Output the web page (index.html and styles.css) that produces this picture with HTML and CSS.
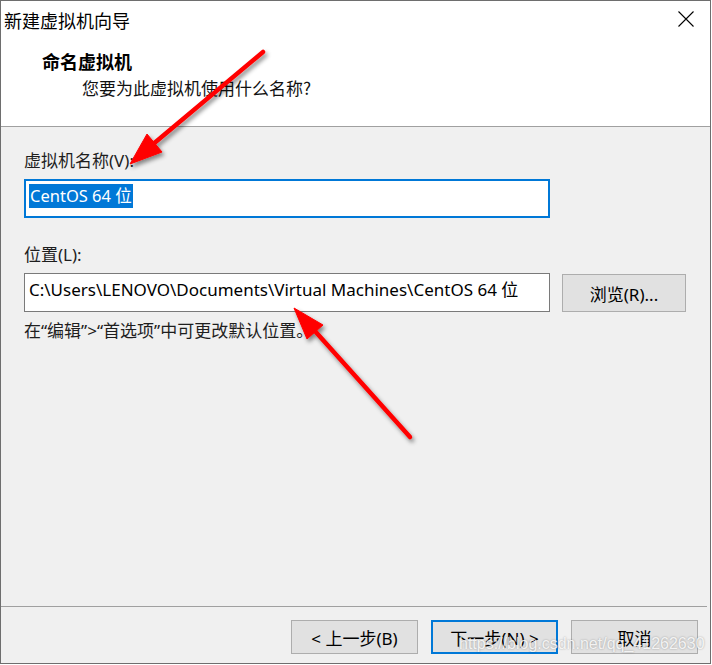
FILE: index.html
```html
<!DOCTYPE html>
<html lang="zh-CN">
<head>
<meta charset="utf-8">
<title>新建虚拟机向导</title>
<link rel="stylesheet" href="styles.css">
</head>
<body>
<div class="window">
  <div class="top">
    <div class="titlebar">
      <span class="title">新建虚拟机向导</span>
      <svg class="close" width="16" height="16" viewBox="0 0 16 16"><path d="M0.5 0.5 L15.5 15.5 M15.5 0.5 L0.5 15.5" stroke="#000" stroke-width="1.1" fill="none"/></svg>
    </div>
    <div class="heading">命名虚拟机</div>
    <div class="subheading">您要为此虚拟机使用什么名称?</div>
  </div>
  <div class="content">
    <div class="label">虚拟机名称(V):</div>
    <div class="input focused"><span class="sel">CentOS 64 位</span></div>
    <div class="label label2">位置(L):</div>
    <div class="row">
      <div class="input">C:\Users\LENOVO\Documents\Virtual Machines\CentOS 64 位</div>
      <div class="btn browse">浏览(R)...</div>
    </div>
    <div class="hint">在“编辑”&gt;“首选项”中可更改默认位置。</div>
  </div>
  <div class="footer">
    <div class="btn nav">&lt; 上一步(B)</div>
    <div class="btn nav default">下一步(N) &gt;</div>
    <div class="btn nav">取消</div>
  </div>
  <div class="watermark">https://blog.csdn.net/qq_41262630</div>
  <svg class="arrows" width="712" height="665" viewBox="0 0 712 665">
    <defs>
      <filter id="sh" x="-20%" y="-20%" width="140%" height="140%">
        <feDropShadow dx="2" dy="3" stdDeviation="2" flood-color="#000" flood-opacity="0.45"/>
      </filter>
    </defs>
    <g filter="url(#sh)" fill="#ff0000" stroke="#ff0000">
      <line x1="263" y1="52" x2="152" y2="145" stroke-width="4.5" stroke-linecap="round"/>
      <polygon points="130,164 162,152 147,134" stroke-width="1" stroke-linejoin="round"/>
      <line x1="410" y1="437" x2="314" y2="330" stroke-width="4.5" stroke-linecap="round"/>
      <polygon points="294,308 323,325 307,339" stroke-width="1" stroke-linejoin="round"/>
    </g>
  </svg>
</div>
</body>
</html>
```
FILE: styles.css
```css
html, body {
  margin: 0;
  padding: 0;
  background: #ffffff;
}
body {
  font-family: "Noto Sans", "Noto Sans CJK SC", sans-serif;
  color: #000;
}
.window {
  position: relative;
  width: 709px;
  height: 662px;
  border: 1px solid #6e6e6e;
  background: #f0f0f0;
  display: flex;
  flex-direction: column;
}
.top {
  background: #ffffff;
  border-bottom: 1px solid #a0a0a0;
  box-sizing: border-box;
  height: 126px;
}
.titlebar {
  display: flex;
  justify-content: space-between;
  align-items: flex-start;
  padding: 9px 16px 0 3px;
  height: 29px;
}
.title {
  font-family: "Noto Sans CJK SC", sans-serif;
  font-size: 18px;
  line-height: 20px;
}
.close {
  margin-top: 1px;
}
.heading {
  font-family: "Noto Sans CJK SC", sans-serif;
  font-weight: bold;
  font-size: 18px;
  line-height: 20px;
  margin: 12px 0 0 41px;
}
.subheading {
  font-family: "Noto Sans CJK SC", sans-serif;
  font-size: 17px;
  line-height: 20px;
  margin: 7px 0 0 81px;
  color: #111;
}
.content {
  flex: 1;
  padding: 24px 0 0 23px;
}
.label {
  font-size: 17px;
  line-height: 20px;
  color: #1e1e1e;
}
.label2 {
  margin-top: 27px;
}
.input {
  box-sizing: border-box;
  width: 526px;
  height: 39px;
  margin-top: 8px;
  background: #fff;
  border: 1px solid #7a7a7a;
  padding: 4px 0 0 4px;
  font-size: 17px;
  line-height: 24px;
  white-space: nowrap;
  overflow: hidden;
}
.input.focused {
  border: 2px solid #0078d7;
  padding: 3px 0 0 3px;
  font-size: 16.5px;
}
.sel {
  background: #0078d7;
  color: #fff;
  display: inline-block;
  padding: 0 1px 0 1px;
}
.row {
  display: flex;
  align-items: flex-start;
  gap: 12px;
}
.btn {
  box-sizing: border-box;
  background: #e1e1e1;
  border: 1px solid #adadad;
  display: flex;
  align-items: center;
  justify-content: center;
  font-size: 17px;
  color: #000;
}
.browse {
  width: 124px;
  height: 38px;
  margin-top: 9px;
}
.hint {
  font-size: 17px;
  line-height: 20px;
  margin-top: 9px;
  color: #1e1e1e;
}
.footer {
  height: 57px;
  box-sizing: border-box;
  border-top: 1px solid #a0a0a0;
  margin-right: 3px;
  display: flex;
  justify-content: flex-end;
  align-items: flex-start;
  gap: 13px;
  padding: 13px 9px 0 0;
}
.nav {
  width: 127px;
  height: 34px;
}
.nav.default {
  border: 2px solid #0078d7;
}
.watermark {
  position: absolute;
  left: 458px;
  top: 633px;
  font-family: "Liberation Sans", sans-serif;
  font-size: 16px;
  line-height: 20px;
  color: rgba(255, 255, 255, 0.85);
  text-shadow: 0 0 2px rgba(0, 0, 0, 0.35);
  white-space: nowrap;
}
.arrows {
  position: absolute;
  left: -1px;
  top: -1px;
  pointer-events: none;
}
```
